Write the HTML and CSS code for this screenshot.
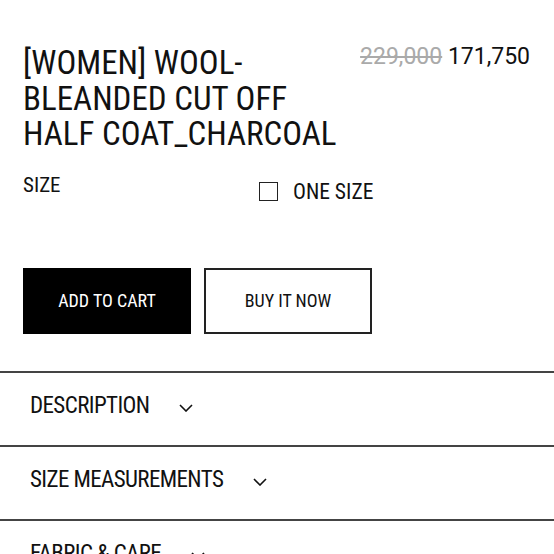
FILE: index.html
```html
<!DOCTYPE html>
<html lang="en">
<head>
<meta charset="utf-8">
<title>Product</title>
<link rel="stylesheet" href="styles.css">
</head>
<body>
<main class="product">
  <header class="head">
    <h1 class="title">[WOMEN] WOOL-<br>BLEANDED CUT OFF<br>HALF COAT_CHARCOAL</h1>
    <div class="price"><span class="old">229,000</span> <span class="now">171,750</span></div>
  </header>
  <div class="size-row">
    <div class="size-label">SIZE</div>
    <label class="option"><span class="box"></span><span class="opt-text">ONE SIZE</span></label>
  </div>
  <div class="actions">
    <button class="btn btn-cart">ADD TO CART</button>
    <button class="btn btn-buy">BUY IT NOW</button>
  </div>
  <section class="accordion">
    <div class="acc-item"><span class="acc-label">DESCRIPTION</span><svg class="chev" viewBox="0 0 14 8" width="14" height="8"><path d="M1 1 L7 7 L13 1" fill="none" stroke="#111" stroke-width="1.6"/></svg></div>
    <div class="acc-item"><span class="acc-label">SIZE MEASUREMENTS</span><svg class="chev" viewBox="0 0 14 8" width="14" height="8"><path d="M1 1 L7 7 L13 1" fill="none" stroke="#111" stroke-width="1.6"/></svg></div>
    <div class="acc-item"><span class="acc-label">FABRIC &amp; CARE</span><svg class="chev" viewBox="0 0 14 8" width="14" height="8"><path d="M1 1 L7 7 L13 1" fill="none" stroke="#111" stroke-width="1.6"/></svg></div>
  </section>
</main>
</body>
</html>
```

FILE: styles.css
```css
html, body {
  margin: 0;
  padding: 0;
  background: #fff;
}
body {
  width: 554px;
  height: 554px;
  overflow: hidden;
  font-family: Roboto, "DejaVu Sans Condensed", sans-serif;
  font-stretch: 75%;
  color: #111;
}
.product {
  display: flex;
  flex-direction: column;
}
.head {
  display: flex;
  justify-content: space-between;
  align-items: flex-start;
  padding: 45px 24px 0 23px;
}
.title {
  margin: 0;
  font-weight: normal;
  font-size: 33px;
  line-height: 35.5px;
  white-space: nowrap;
}
.price {
  font-stretch: 100%;
  font-size: 23px;
  line-height: 23px;
  white-space: nowrap;
}
.old {
  color: #aaa;
  text-decoration: line-through;
}
.size-row {
  display: flex;
  align-items: flex-start;
  margin-top: 23px;
  padding-left: 23px;
}
.size-label {
  width: 236px;
  font-size: 21px;
  line-height: 21px;
}
.option {
  display: flex;
  align-items: center;
  gap: 15px;
  margin-top: 6px;
  font-size: 21.5px;
  line-height: 21px;
}
.box {
  width: 17px;
  height: 17px;
  border: 1.5px solid #222;
}
.actions {
  display: flex;
  gap: 13px;
  margin-top: 66px;
  padding-left: 23px;
}
.btn {
  width: 168px;
  height: 66px;
  font-family: inherit;
  font-stretch: inherit;
  font-size: 18px;
  padding: 0;
  cursor: pointer;
}
.btn-cart {
  background: #000;
  color: #fff;
  border: none;
}
.btn-buy {
  background: #fff;
  color: #111;
  border: 2px solid #222;
}
.accordion {
  margin-top: 37px;
}
.acc-item {
  display: flex;
  align-items: flex-start;
  height: 72px;
  border-top: 2px solid #444;
  padding-left: 30px;
}
.acc-label {
  margin-top: 21px;
  font-size: 23px;
  line-height: 23px;
  letter-spacing: -0.6px;
}
.chev {
  margin-left: 30px;
  margin-top: 31px;
}
```
